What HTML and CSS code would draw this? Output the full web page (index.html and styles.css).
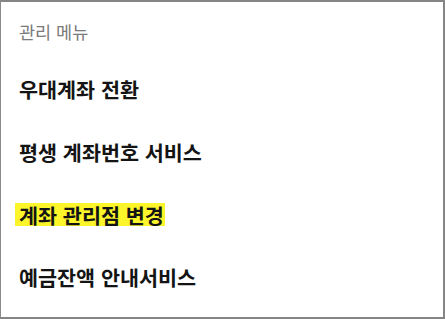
FILE: index.html
```html
<!DOCTYPE html>
<html lang="ko">
<head>
<meta charset="utf-8">
<title>관리 메뉴</title>
<link rel="stylesheet" href="styles.css">
</head>
<body>
<div class="panel">
  <div class="title">관리 메뉴</div>
  <ul class="menu">
    <li class="item">우대계좌 전환</li>
    <li class="item">평생 계좌번호 서비스</li>
    <li class="item"><span class="mark">계좌 관리점 변경</span></li>
    <li class="item">예금잔액 안내서비스</li>
  </ul>
</div>
</body>
</html>
```
FILE: styles.css
```css
html, body {
  margin: 0;
  padding: 0;
  background: #ffffff;
}
.panel {
  box-sizing: border-box;
  width: 445px;
  height: 319px;
  border-top: 2px solid #858585;
  border-right: 2px solid #858585;
  border-bottom: 2px solid #858585;
  border-left: 1px solid #8a8a8a;
  padding: 18px 0 0 18px;
  font-family: "Noto Sans CJK KR", "Noto Sans", sans-serif;
  background: #ffffff;
}
.title {
  font-size: 17.5px;
  line-height: 24px;
  color: #7a7a7a;
  font-weight: 400;
}
.menu {
  list-style: none;
  margin: 14px 0 0 0;
  padding: 0;
}
.item {
  height: 62.5px;
  display: flex;
  align-items: center;
  font-size: 20.7px;
  font-weight: 700;
  color: #141414;
}
.mark {
  display: inline-block;
  line-height: 22px;
  padding: 1px 1px 0 4px;
  margin-left: -4px;
  background: #fbf52a;
}
```
